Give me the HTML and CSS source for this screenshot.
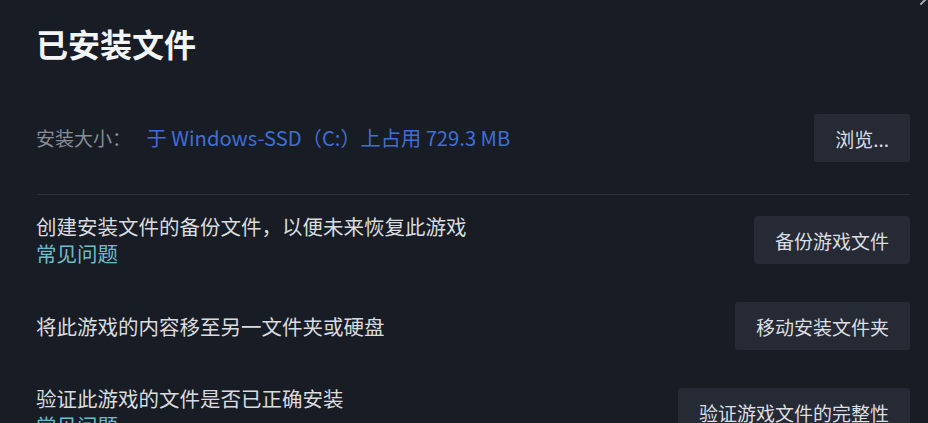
FILE: index.html
```html
<!DOCTYPE html>
<html lang="zh-CN">
<head>
    <meta charset="UTF-8">
    <meta name="viewport" content="width=device-width, initial-scale=1.0">
    <title>已安装文件</title>
    <link rel="stylesheet" href="styles.css">
</head>
<body>
    <div class="panel">
        <svg class="close" width="20" height="20" viewBox="0 0 20 20">
            <path d="M4 16 L16 4 M4 4 L16 16" stroke="#a3a8b0" stroke-width="2" fill="none" stroke-linecap="round"/>
        </svg>

        <h1>已安装文件</h1>

        <div class="row">
            <div class="size">
                <span class="size-label">安装大小：</span>
                <span class="size-value">于 Windows-SSD（C:）上占用 729.3 MB</span>
            </div>
            <button class="btn">浏览...</button>
        </div>

        <div class="divider"></div>

        <div class="row">
            <div class="text">
                <div>创建安装文件的备份文件，以便未来恢复此游戏</div>
                <a class="faq" href="#">常见问题</a>
            </div>
            <button class="btn">备份游戏文件</button>
        </div>

        <div class="row">
            <div class="text">
                <div>将此游戏的内容移至另一文件夹或硬盘</div>
            </div>
            <button class="btn">移动安装文件夹</button>
        </div>

        <div class="row">
            <div class="text">
                <div>验证此游戏的文件是否已正确安装</div>
                <a class="faq" href="#">常见问题</a>
            </div>
            <button class="btn">验证游戏文件的完整性</button>
        </div>
    </div>
</body>
</html>
```

FILE: styles.css
```css
html, body {
    margin: 0;
    height: 100%;
    overflow: hidden;
}

body {
    background: #181c25;
    font-family: "Noto Sans CJK SC", "Noto Sans", sans-serif;
    color: #d9dbdf;
}

.panel {
    position: relative;
    padding: 23px 18px 0 36px;
}

.close {
    position: absolute;
    top: -12px;
    right: -9px;
}

h1 {
    margin: 0 0 48px;
    font-size: 32px;
    line-height: 40px;
    font-weight: 700;
    color: #f4f5f7;
}

.row {
    display: flex;
    align-items: center;
    justify-content: space-between;
    min-height: 54px;
    margin-bottom: 32px;
}

.size {
    line-height: 27px;
}

.size-label {
    font-size: 19px;
    color: #878b93;
    margin-right: 12px;
}

.size-value {
    font-size: 20.2px;
    color: #3f6fd4;
}

.divider {
    height: 1px;
    background: #2b303b;
    margin: -3px 0 18px 1px;
}

.text {
    font-size: 20.5px;
    line-height: 27px;
}

.faq {
    display: block;
    color: #6cbccb;
    text-decoration: none;
}

.btn {
    height: 48px;
    padding: 0 21px;
    border: none;
    border-radius: 3px;
    background: #252a34;
    color: #dcdee2;
    font-family: inherit;
    font-size: 19px;
    cursor: pointer;
}

.btn:hover {
    background: #30353f;
}
```
